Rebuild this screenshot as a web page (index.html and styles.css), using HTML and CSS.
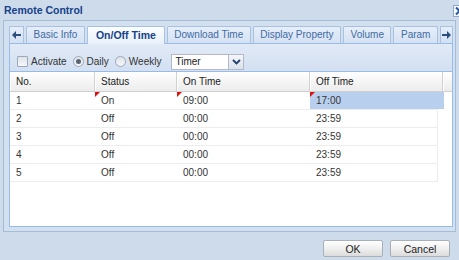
FILE: index.html
```html
<!DOCTYPE html>
<html lang="en">
<head>
    <meta charset="UTF-8">
    <title>Remote Control</title>
    <link rel="stylesheet" href="styles.css">
</head>
<body>
    <div class="win">
        <div class="win-head">
            <span class="win-title">Remote Control</span>
            <span class="win-close">
                <svg width="11" height="10" viewBox="0 0 11 10"><path d="M2 1.5 L9 8.5 M9 1.5 L2 8.5" stroke="#2a5a9c" stroke-width="2"/></svg>
            </span>
        </div>

        <div class="win-body">
            <div class="tabstrip">
                <span class="tab-scroll">
                    <svg width="9" height="8" viewBox="0 0 9 8"><path d="M0 4 L4 0 L4 3 L9 3 L9 5 L4 5 L4 8 Z" fill="#2d4f80"/></svg>
                </span>
                <span class="tab">Basic Info</span>
                <span class="tab active">On/Off Time</span>
                <span class="tab">Download Time</span>
                <span class="tab">Display Property</span>
                <span class="tab">Volume</span>
                <span class="tab">Param</span>
                <span class="tab-scroll right">
                    <svg width="9" height="8" viewBox="0 0 9 8"><path d="M9 4 L5 0 L5 3 L0 3 L0 5 L5 5 L5 8 Z" fill="#2d4f80"/></svg>
                </span>
            </div>

            <div class="tab-body">
                <div class="toolbar">
                    <label class="opt"><span class="check"></span>Activate</label>
                    <label class="opt"><span class="radio on"></span>Daily</label>
                    <label class="opt"><span class="radio"></span>Weekly</label>
                    <div class="combo">
                        <span class="combo-text">Timer</span>
                        <span class="combo-btn">
                            <svg width="9" height="6" viewBox="0 0 9 6"><path d="M1 1 L4.5 4.5 L8 1" fill="none" stroke="#1f3f73" stroke-width="1.8"/></svg>
                        </span>
                    </div>
                </div>

                <div class="grid">
                    <div class="grid-head">
                        <div class="hcell">No.</div>
                        <div class="hcell">Status</div>
                        <div class="hcell">On Time</div>
                        <div class="hcell">Off Time</div>
                        <div class="hcell last"></div>
                    </div>
                    <div class="row">
                        <div class="cell">1</div>
                        <div class="cell dirty">On</div>
                        <div class="cell dirty">09:00</div>
                        <div class="cell dirty selected">17:00</div>
                    </div>
                    <div class="row">
                        <div class="cell">2</div>
                        <div class="cell">Off</div>
                        <div class="cell">00:00</div>
                        <div class="cell">23:59</div>
                    </div>
                    <div class="row">
                        <div class="cell">3</div>
                        <div class="cell">Off</div>
                        <div class="cell">00:00</div>
                        <div class="cell">23:59</div>
                    </div>
                    <div class="row">
                        <div class="cell">4</div>
                        <div class="cell">Off</div>
                        <div class="cell">00:00</div>
                        <div class="cell">23:59</div>
                    </div>
                    <div class="row">
                        <div class="cell">5</div>
                        <div class="cell">Off</div>
                        <div class="cell">00:00</div>
                        <div class="cell">23:59</div>
                    </div>
                </div>
            </div>
        </div>

        <div class="win-foot">
            <button class="btn">OK</button>
            <button class="btn">Cancel</button>
        </div>
    </div>
</body>
</html>
```

FILE: styles.css
```css
body {
    margin: 0;
    font-family: "Liberation Sans", Arial, sans-serif;
    font-size: 10px;
    color: #222;
}

.win {
    width: 459px;
    height: 260px;
    background-color: #cedbea;
    overflow: hidden;
}

/* title bar */
.win-head {
    height: 20px;
    display: flex;
    align-items: center;
    padding-left: 4px;
}

.win-title {
    font-weight: bold;
    font-size: 10.5px;
    color: #15428b;
}

.win-close {
    margin-left: auto;
    margin-right: -7px;
    margin-top: 2px;
    width: 13px;
    height: 12px;
    box-sizing: border-box;
    border: 1px solid #8fa9cd;
    background: #f4f8fd;
    display: flex;
    align-items: center;
    justify-content: center;
}

/* body frame */
.win-body {
    margin: 0 3px;
    height: 212px;
    box-sizing: border-box;
    border: 1px solid #a5bcd9;
    background-color: #d3e0f0;
    padding: 5px 2px 4px 5px;
}

/* tabs */
.tabstrip {
    height: 17px;
    display: flex;
    gap: 2px;
    border-bottom: 1px solid #99bbe8;
}

.tab-scroll {
    width: 15px;
    height: 17px;
    box-sizing: border-box;
    border: 1px solid #a9c1e0;
    border-bottom: none;
    background: linear-gradient(#e6eef9, #d3e1f2);
    display: flex;
    align-items: center;
    justify-content: center;
}

.tab-scroll.right {
    width: 13px;
    margin-left: auto;
}

.tab {
    height: 16px;
    line-height: 16px;
    padding: 0 6.5px;
    border: 1px solid #a9c1e0;
    border-bottom: none;
    border-radius: 2px 2px 0 0;
    background: linear-gradient(#e6eef9, #d5e2f3);
    color: #416aa3;
    white-space: nowrap;
}

.tab.active {
    height: 17px;
    margin-bottom: -1px;
    padding: 0 8px;
    background: linear-gradient(#fbfdff, #e8f0fa);
    color: #15428b;
    font-weight: bold;
    font-size: 10.5px;
}

.tab-body {
    height: 183px;
    box-sizing: border-box;
    border: 1px solid #99bbe8;
    border-top: none;
    display: flex;
    flex-direction: column;
}

/* toolbar */
.toolbar {
    height: 27px;
    box-sizing: border-box;
    padding: 9px 0 1px 7px;
    display: flex;
    align-items: center;
    background: linear-gradient(#e1eaf7, #d3e0f1);
}

.opt {
    display: flex;
    align-items: center;
    gap: 3px;
    margin-right: 6px;
    color: #333;
}

.check {
    width: 11px;
    height: 11px;
    box-sizing: border-box;
    border: 1px solid #9aa8ba;
    border-radius: 1px;
    background: linear-gradient(#dfe4ea, #f6f8fb);
}

.radio {
    width: 11px;
    height: 11px;
    box-sizing: border-box;
    border: 1px solid #9aa8ba;
    border-radius: 50%;
    background: linear-gradient(#dfe4ea, #f6f8fb);
    display: flex;
    align-items: center;
    justify-content: center;
}

.radio.on::after {
    content: "";
    width: 5px;
    height: 5px;
    border-radius: 50%;
    background: #5a6472;
}

.combo {
    margin-left: 4px;
    width: 73px;
    height: 16px;
    box-sizing: border-box;
    border: 1px solid #b5b8c8;
    background: #fff;
    display: flex;
    align-items: center;
}

.combo-text {
    flex: 1;
    padding-left: 3px;
    color: #222;
}

.combo-btn {
    width: 15px;
    height: 14px;
    box-sizing: border-box;
    border-left: 1px solid #b5b8c8;
    background: linear-gradient(#f4f6f9, #dbe2ea);
    display: flex;
    align-items: center;
    justify-content: center;
}

/* grid */
.grid {
    flex: 1;
    background: #fff;
    border-top: 1px solid #99bbe8;
}

.grid-head {
    display: grid;
    grid-template-columns: 85px 82px 133px 133px 1fr;
    height: 19px;
    border-bottom: 1px solid #d0d0d0;
    background: linear-gradient(#ffffff, #ececec);
}

.hcell {
    line-height: 19px;
    padding-left: 6px;
    border-right: 1px solid #d0d0d0;
    box-shadow: inset 1px 0 0 #fff;
    color: #222;
}

.hcell.last {
    border-right: none;
}

.row {
    display: grid;
    grid-template-columns: 85px 82px 133px 128px;
    width: 428px;
    height: 18px;
    box-sizing: border-box;
    border-right: 1px solid #ededed;
    border-bottom: 1px solid #ededed;
}

.cell {
    position: relative;
    line-height: 17px;
    padding-left: 6px;
    color: #333;
}

.cell.dirty::before {
    content: "";
    position: absolute;
    left: 0;
    top: 0;
    border-top: 5px solid #d11;
    border-right: 5px solid transparent;
}

.cell.selected {
    margin-right: -6px;
    background: #b9cfee;
}

/* footer */
.win-foot {
    display: flex;
    justify-content: flex-end;
    gap: 7px;
    padding: 8px 9px 0 0;
}

.btn {
    width: 60px;
    height: 17px;
    padding: 0;
    font-family: "Liberation Sans", Arial, sans-serif;
    font-size: 10.5px;
    color: #222;
    border: 1px solid #aab0b8;
    border-radius: 2px;
    background: linear-gradient(#ffffff 0%, #f1f1f1 45%, #dcdcdc 100%);
}
```
